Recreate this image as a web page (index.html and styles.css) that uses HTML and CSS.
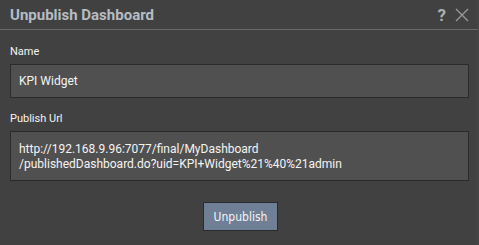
FILE: index.html
```html
<!DOCTYPE html>
<html>
<head>
<meta charset="utf-8">
<link rel="stylesheet" href="styles.css">
</head>
<body>
<div class="dialog">
  <div class="titlebar">
    <span class="title">Unpublish Dashboard</span>
    <div class="tools">
      <span class="help">?</span>
      <svg class="close" width="14" height="14" viewBox="0 0 14 14"><path d="M1 1L13 13M13 1L1 13" stroke="#9a9a9a" stroke-width="1.3" fill="none"/></svg>
    </div>
  </div>
  <div class="content">
    <label class="label">Name</label>
    <div class="field">KPI Widget</div>
    <label class="label label-url">Publish Url</label>
    <div class="field area">http://192.168.9.96:7077/final/MyDashboard<br>/publishedDashboard.do?uid=KPI+Widget%21%40%21admin</div>
    <div class="actions">
      <button class="btn">Unpublish</button>
    </div>
  </div>
</div>
</body>
</html>
```
FILE: styles.css
```css
html, body {
  margin: 0;
  padding: 0;
  background: #414141;
}
.dialog {
  width: 479px;
  height: 245px;
  box-sizing: border-box;
  background: #414141;
  border-right: 1px solid #484848;
  font-family: Roboto, "Liberation Sans", sans-serif;
  color: #f2f2f2;
}
.titlebar {
  height: 29px;
  border-bottom: 1px solid #6a6a6a;
  display: flex;
  align-items: center;
  justify-content: space-between;
  padding: 0 9px 0 10px;
}
.title {
  font-size: 15px;
  font-weight: bold;
  color: #b6bcc4;
  margin-top: 1px;
}
.tools {
  display: flex;
  align-items: center;
  gap: 9px;
}
.help {
  font-size: 17px;
  font-weight: bold;
  color: #b0b0b0;
  margin-top: 1px;
}
.close {
  display: block;
}
.content {
  padding: 15px 9px 0 10px;
  display: flex;
  flex-direction: column;
}
.label {
  font-size: 11px;
  line-height: 13px;
  color: #f4f4f4;
  margin-bottom: 6px;
}
.label-url {
  margin-top: 14px;
}
.field {
  box-sizing: border-box;
  height: 34px;
  border: 1px solid #2b2b2b;
  background: #505050;
  padding: 0 8px;
  font-size: 12px;
  line-height: 32px;
  color: #f4f4f4;
}
.area {
  height: 50px;
  padding: 10px 8px;
  line-height: 15px;
}
.actions {
  display: flex;
  justify-content: center;
  padding-top: 21px;
}
.btn {
  box-sizing: border-box;
  width: 75px;
  height: 29px;
  background: #6e7f96;
  border: 1px solid #2b2b2b;
  color: #f4f4f4;
  font-family: "DejaVu Sans Condensed", "DejaVu Sans", sans-serif;
  font-size: 12px;
  padding: 0;
  margin-left: 2px;
}
```
